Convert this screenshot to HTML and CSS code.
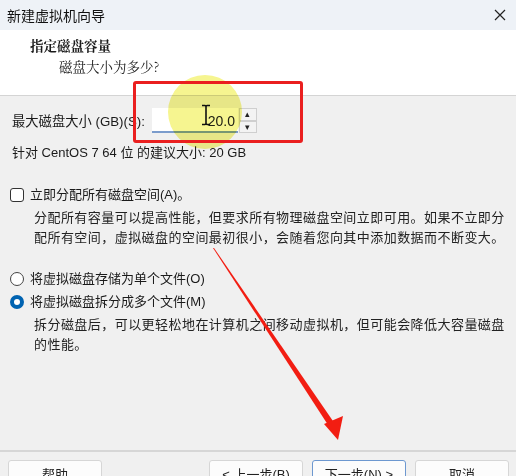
FILE: index.html
```html
<!DOCTYPE html>
<html lang="zh-CN">
<head>
  <meta charset="UTF-8" />
  <meta name="viewport" content="width=device-width, initial-scale=1.0"/>
  <title>新建虚拟机向导</title>
  <link rel="stylesheet" href="styles.css">
</head>
<body>
  <div class="dialog">
    <div class="titlebar">
      <span class="title">新建虚拟机向导</span>
      <svg class="close" width="12" height="12" viewBox="0 0 12 12">
        <path d="M1 1 L11 11 M11 1 L1 11" stroke="#222" stroke-width="1.2" fill="none"/>
      </svg>
    </div>

    <div class="header">
      <div class="header-title">指定磁盘容量</div>
      <div class="header-sub">磁盘大小为多少?</div>
    </div>

    <div class="content">
      <div class="size-row">
        <span>最大磁盘大小 (GB)(S):</span>
        <div class="spin-input">
          <div class="field">20.0</div>
          <div class="spinner">
            <div class="spin-btn">&#9652;</div>
            <div class="spin-btn">&#9662;</div>
          </div>
        </div>
      </div>
      <div class="hint">针对 CentOS 7 64 位 的建议大小: 20 GB</div>

      <div class="option check-option">
        <span class="checkbox"></span>
        <span>立即分配所有磁盘空间(A)。</span>
      </div>
      <p class="desc">分配所有容量可以提高性能，但要求所有物理磁盘空间立即可用。如果不立即分配所有空间，虚拟磁盘的空间最初很小，会随着您向其中添加数据而不断变大。</p>

      <div class="option radio-first">
        <span class="radio"></span>
        <span>将虚拟磁盘存储为单个文件(O)</span>
      </div>
      <div class="option radio-second">
        <span class="radio checked"></span>
        <span>将虚拟磁盘拆分成多个文件(M)</span>
      </div>
      <p class="desc">拆分磁盘后，可以更轻松地在计算机之间移动虚拟机，但可能会降低大容量磁盘的性能。</p>
    </div>

    <div class="footer">
      <button class="btn">帮助</button>
      <div class="spacer"></div>
      <button class="btn">&lt; 上一步(B)</button>
      <button class="btn btn-focus">下一步(N) &gt;</button>
      <button class="btn">取消</button>
    </div>
  </div>

  <!-- annotations drawn over the screenshot -->
  <div class="glow"></div>
  <div class="mark-box"></div>
  <svg class="ibeam" width="12" height="22" viewBox="0 0 12 22">
    <path d="M2 1.5 H5 Q6 1.5 6 3 V19 Q6 20.5 5 20.5 H2 M10 1.5 H7 Q6 1.5 6 3 M6 19 Q6 20.5 7 20.5 H10" stroke="#111" stroke-width="1.6" fill="none"/>
  </svg>
  <svg class="arrow" width="516" height="476" viewBox="0 0 516 476">
    <polygon points="213,248 214,248 335,424 330,428" fill="#f21d12"/>
    <polygon points="338,440 324,424 343,416" fill="#f21d12"/>
  </svg>
</body>
</html>
```

FILE: styles.css
```css
* {
  margin: 0; padding: 0;
  box-sizing: border-box;
}

body {
  width: 516px;
  height: 476px;
  overflow: hidden;
  position: relative;
  background: #f0f0f0;
  font-family: "Liberation Sans", "Noto Sans CJK SC", sans-serif;
  font-size: 13px;
  color: #1a1a1a;
}

.dialog {
  display: flex;
  flex-direction: column;
  height: 476px;
}

.titlebar {
  height: 30px;
  flex: none;
  display: flex;
  align-items: center;
  justify-content: space-between;
  padding: 0 10px 0 7px;
  background: #eef2f7;
}

.title {
  font-size: 14px;
  color: #111;
}

.header {
  height: 66px;
  flex: none;
  background: #fff;
  border-bottom: 1px solid #d4d4d4;
  padding: 5px 0 0 30px;
  font-family: "Noto Serif CJK SC", "Noto Sans CJK SC", serif;
}

.header-title {
  font-weight: bold;
  line-height: 20px;
  font-size: 13.5px;
}

.header-sub {
  line-height: 20px;
  margin: 1px 0 0 29px;
  font-size: 13.5px;
  color: #222;
}

.content {
  flex: 1;
  padding: 12px 0 0 12px;
}

.size-row {
  display: flex;
  align-items: center;
  height: 25px;
}

.size-row > span {
  font-size: 13.3px;
}

.spin-input {
  display: flex;
  margin-left: 7px;
  height: 25px;
}

.field {
  width: 86px;
  background: #fff;
  border-bottom: 2px solid #7b9ccc;
  text-align: right;
  padding: 3px 3px 0 0;
  font-size: 14px;
  line-height: 20px;
  color: #222;
}

.spinner {
  display: flex;
  flex-direction: column;
  width: 18px;
  margin-left: 1px;
}

.spin-btn {
  flex: 1;
  border: 1px solid #cfcfcf;
  background: #f3f3f3;
  font-size: 9px;
  line-height: 10px;
  text-align: center;
  color: #222;
}

.hint {
  margin-top: 10px;
  line-height: 20px;
}

.option {
  display: flex;
  align-items: center;
  gap: 6px;
  line-height: 20px;
  margin-left: -2px;
}

.check-option { margin-top: 22px; }
.radio-first { margin-top: 21px; }
.radio-second { margin-top: 3px; }

.checkbox {
  width: 14px;
  height: 14px;
  border: 1px solid #333;
  border-radius: 3px;
  background: #fff;
}

.radio {
  width: 14px;
  height: 14px;
  border: 1px solid #444;
  border-radius: 50%;
  background: #fff;
}

.radio.checked {
  border: 4px solid #0063b1;
}

.desc {
  margin: 3px 8px 0 22px;
  line-height: 20px;
  font-size: 13px;
  letter-spacing: 0.45px;
  color: #222;
}

.footer {
  height: 26px;
  flex: none;
  display: flex;
  gap: 9px;
  border-top: 2px solid #d6d6d6;
  padding: 8px 7px 0 8px;
}

.spacer { flex: 1; }

.btn {
  width: 94px;
  height: 26px;
  flex: none;
  background: #fcfcfc;
  border: 1px solid #d6d6d6;
  border-radius: 3px;
  font-family: "Liberation Sans", "Noto Sans CJK SC", sans-serif;
  font-size: 13px;
  color: #222;
  padding-top: 4px;
  line-height: 18px;
}

.btn-focus {
  border-color: #6d98d0;
}

.glow {
  position: absolute;
  left: 168px;
  top: 75px;
  width: 74px;
  height: 74px;
  border-radius: 50%;
  background: #f6f590;
  mix-blend-mode: multiply;
}

.mark-box {
  position: absolute;
  left: 133px;
  top: 81px;
  width: 170px;
  height: 62px;
  border: 3px solid #ea1f1f;
  border-radius: 3px;
}

.ibeam {
  position: absolute;
  left: 200px;
  top: 104px;
}

.arrow {
  position: absolute;
  left: 0;
  top: 0;
}
```
